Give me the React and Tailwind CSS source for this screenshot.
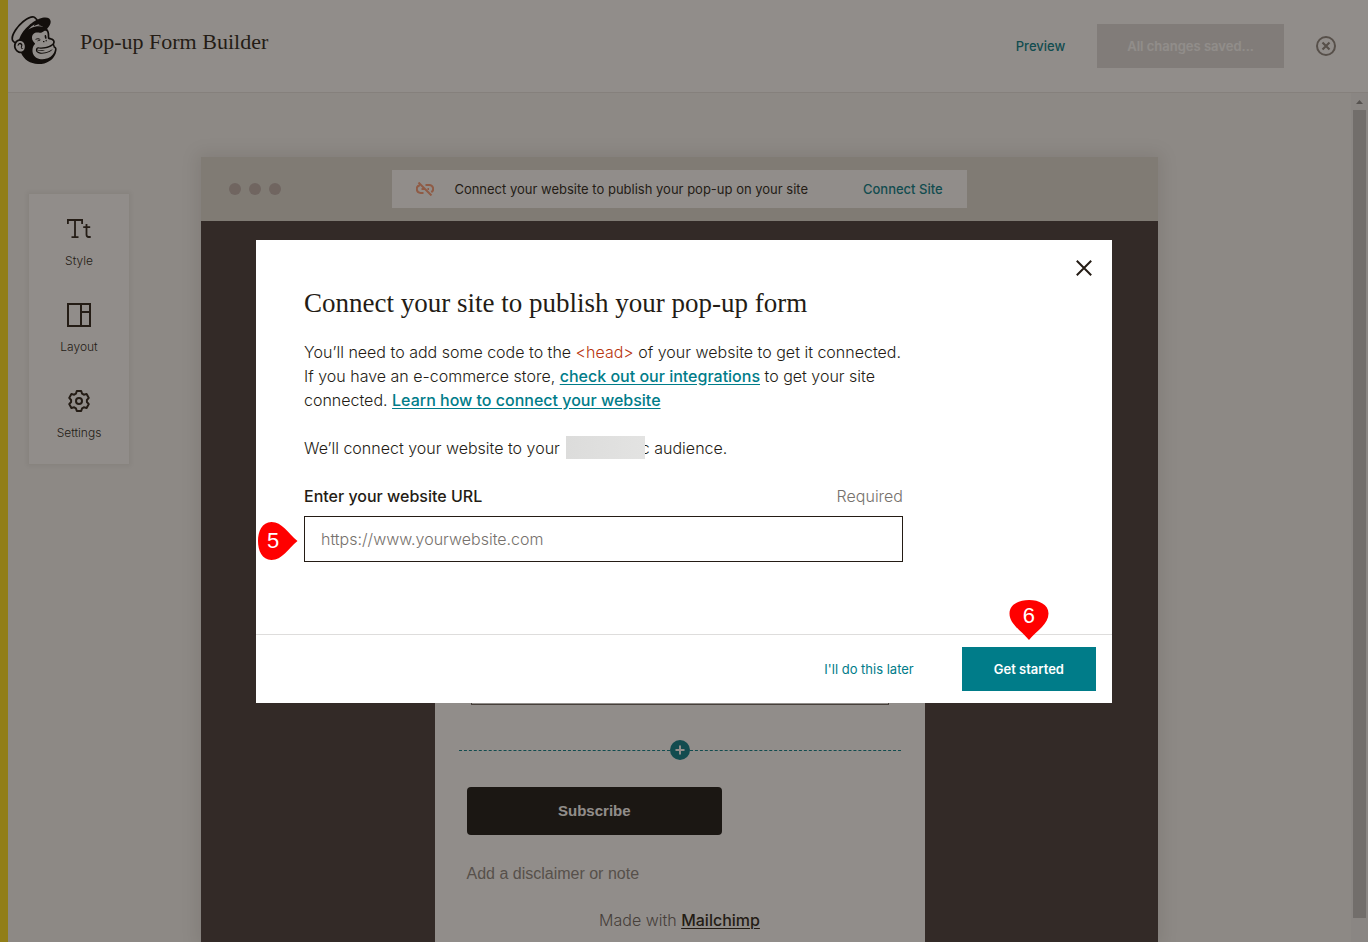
import React from "react";
import { SiMailchimp } from "react-icons/si";

const marks = {
  left: "M39.5 19 C30 27 24 38 13.500 38 C4 38 0 28.500 0 19 C0 9.500 4 0 13.500 0 C24 0 30 11 39.500 19 Z",
  down: "M19.500 40 C11.500 30.500 0 24 0 13.500 C0 4.500 9.500 0 19.500 0 C29.500 0 39 4.500 39 13.500 C39 24 27.500 30.500 19.500 40 Z",
};

function ToolButton({ label, children }) {
  return (
    <button type="button" className="flex flex-col items-center gap-3 text-xs leading-4 font-light text-[#241c15]">
      <span className="flex h-6 w-6 items-center justify-center">{children}</span>
      {label}
    </button>
  );
}

function Header() {
  return (
    <header className="flex h-[93px] shrink-0 items-center justify-between border-b border-[#e6e5e3] bg-white pr-8 pl-0.5">
      <div className="flex items-center gap-[22px] pb-2">
        <SiMailchimp className="mb-1 h-12 w-12 text-black" aria-label="Mailchimp" />
        <h1 className="font-['Liberation_Serif',serif] text-[22px] leading-7 text-[#241c15]">Pop-up Form Builder</h1>
      </div>
      <div className="flex items-center gap-8">
        <a href="#preview" className="pt-0.5 text-[13px] font-medium text-[#007c89]">Preview</a>
        <button type="button" disabled className="h-11 bg-[#dedddc] px-[30px] pt-0.5 text-[13px] font-semibold text-white">
          All changes saved...
        </button>
        <button type="button" aria-label="Exit">
          <svg viewBox="0 0 20 20" className="h-5 w-5" fill="none" stroke="#8b847e" strokeWidth="2">
            <circle cx="10" cy="10" r="9" />
            <path d="M6.500 6.500l7 7M13.500 6.500l-7 7" strokeWidth="2.2" />
          </svg>
        </button>
      </div>
    </header>
  );
}

function Toolbar() {
  return (
    <nav className="mt-[101px] ml-[21px] flex w-[100px] flex-col items-center gap-[34px] self-start bg-white py-[23px] shadow-[0_0_4px_2px_rgba(36,28,21,0.06)]">
      <ToolButton label="Style">
        <svg viewBox="0 0 24 24" className="h-6 w-6" fill="none" stroke="#241c15" strokeWidth="1.800">
          <path d="M.900 7V3h14.200v4M8 3v17M4.500 20.100h7M19.500 7v10.500c0 1.700.8 2.500 2.200 2.500h2M16.200 10.200h7" />
        </svg>
      </ToolButton>
      <ToolButton label="Layout">
        <svg viewBox="0 0 24 24" className="h-6 w-6" fill="none" stroke="#241c15" strokeWidth="2">
          <path d="M1 1h22v22H1zM14 1v22M14 9h9" />
        </svg>
      </ToolButton>
      <ToolButton label="Settings">
        <svg viewBox="0 0 24 24" className="h-6 w-6" fill="none" stroke="#241c15" strokeWidth="2" strokeLinejoin="round">
          <path d="M9.800 2h4.400l.9 2.700 1.700 1 2.800-.6 2.200 3.800-1.900 2.100v2l1.900 2.100-2.200 3.800-2.800-.6-1.700 1-.9 2.700H9.800l-.9-2.700-1.700-1-2.800.6-2.200-3.800L4.100 13v-2L2.200 8.900l2.200-3.800 2.800.6 1.700-1z" />
          <circle cx="12" cy="12" r="3" />
        </svg>
      </ToolButton>
    </nav>
  );
}

function PreviewWindow() {
  return (
    <section className="mt-16 flex min-h-0 flex-col bg-[#423839] shadow-[0_0_16px_4px_rgba(36,28,21,0.1)]">
      <div className="grid h-16 shrink-0 grid-cols-5 items-center bg-[#dcdad3]">
        <div className="flex gap-2 pl-7">
          <span className="h-3 w-3 rounded-full bg-[#bcaeab]" />
          <span className="h-3 w-3 rounded-full bg-[#bcaeab]" />
          <span className="h-3 w-3 rounded-full bg-[#bcaeab]" />
        </div>
        <div className="col-span-3 flex h-[38px] items-center bg-white px-6 text-[13px]">
          <svg viewBox="0 0 18 14" className="mr-5 h-3.5 w-[18px] shrink-0" fill="none" stroke="#fa9a74" strokeWidth="2">
            <path d="M3.800 3.200A3.900 3.900 0 0 0 4.700 10.900H7.500M9.500 3h3.800a3.900 3.900 0 0 1 2 7.200M5.500 7h4M11.500 7h1.500M2.500 .5l13 13" />
          </svg>
          <span className="pt-0.5 whitespace-nowrap text-[#241c15]">Connect your website to publish your pop-up on your site</span>
          <a href="#connect" className="ml-auto pt-0.5 font-medium whitespace-nowrap text-[#007c89]">Connect Site</a>
        </div>
      </div>
      <form className="mx-auto mt-16 flex w-[490px] flex-1 flex-col justify-end bg-white px-6 pb-2.5">
        <div className="px-3">
          <input aria-label="Email Address" className="block h-11 w-full border border-[#6b6560]" />
        </div>
        <div className="mt-[35px] flex items-center">
          <span className="flex-1 border-t border-dashed border-[#007c89]" />
          <button type="button" aria-label="Add field" className="flex h-5 w-5 items-center justify-center rounded-full bg-[#007c89]">
            <svg viewBox="0 0 10 10" className="h-2.5 w-2.5" stroke="#fff" strokeWidth="2">
              <path d="M5 .5v9M.5 5h9" />
            </svg>
          </button>
          <span className="flex-1 border-t border-dashed border-[#007c89]" />
        </div>
        <div className="px-2">
          <button type="button" className="mt-[27px] block h-12 w-3/5 rounded bg-[#121211] font-['Liberation_Sans',sans-serif] text-[15px] font-bold text-white">
            Subscribe
          </button>
          <p className="mt-[27px] font-['Liberation_Sans',sans-serif] text-base leading-6 text-[#8a8580]">Add a disclaimer or note</p>
          <p className="mt-[22px] text-center text-base leading-6 font-light text-[#6a645f]">
            Made with <a href="#mailchimp" className="font-medium text-[#241c15] underline underline-offset-2">Mailchimp</a>
          </p>
        </div>
      </form>
    </section>
  );
}

function ConnectDialog() {
  return (
    <div className="fixed inset-0 flex items-center justify-center bg-[#241c15]/50">
      <div role="dialog" aria-labelledby="dialog-title" className="relative w-full max-w-[856px] bg-white text-[#241c15]">
        <button type="button" aria-label="Close" className="absolute top-5 right-5">
          <svg viewBox="0 0 16 16" className="h-4 w-4" stroke="#241c15" strokeWidth="2">
            <path d="M.8.8l14.400 14.400M15.200.8L.8 15.200" />
          </svg>
        </button>
        <div className="px-12 pt-[47px] pb-[72px]">
          <h2 id="dialog-title" className="font-['Liberation_Serif',serif] text-[27px] leading-8">
            Connect your site to publish your pop-up form
          </h2>
          <div className="mt-[21px] text-base leading-6 font-light whitespace-nowrap">
            <p>
              You’ll need to add some code to the <span className="text-[#b8350e]">&lt;head&gt;</span> of your website to get it connected.
              <br />
              If you have an e-commerce store, <a href="#integrations" className="font-medium text-[#007c89] underline underline-offset-2">check out our integrations</a> to get your site
              <br />
              connected. <a href="#learn" className="font-medium text-[#007c89] underline underline-offset-2">Learn how to connect your website</a>
            </p>
            <p className="mt-6 flex items-center">
              We’ll connect your website to your
              <span className="relative z-10 ml-1.5 h-[23px] w-[79px] bg-linear-to-r from-[#dcdcdb] to-[#e3e3e2]" />
              <span className="-ml-1">c audience.</span>
            </p>
          </div>
          <div className="mt-6 mr-[161px]">
            <div className="flex justify-between text-base leading-6">
              <label htmlFor="site-url" className="font-medium">Enter your website URL</label>
              <span className="font-light text-[#76716c]">Required</span>
            </div>
            <div className="relative mt-2">
              <input
                id="site-url"
                type="url"
                placeholder="https://www.yourwebsite.com"
                className="block h-[46px] w-full border border-[#241c15] px-4 text-base font-light placeholder:text-[#76716c]"
              />
              <div className="absolute top-1.5 right-full mr-1.5 flex h-[38px] w-10 items-center pl-[9px]">
                <svg viewBox="0 0 40 38" className="absolute inset-0 h-full w-full" fill="#ff0000"><path d={marks.left} /></svg>
                <span className="relative font-['Liberation_Sans',sans-serif] text-[22px] leading-6 text-white">5</span>
              </div>
            </div>
          </div>
        </div>
        <div className="flex items-center justify-end gap-12 border-t border-[#dedddc] px-4 py-3 text-[13px]">
          <button type="button" className="pt-0.5 text-[#007c89]">I'll do this later</button>
          <div className="relative">
            <button type="button" className="h-11 bg-[#007c89] px-8 pt-0.5 font-semibold text-white">Get started</button>
            <div className="absolute bottom-full left-1/2 mb-[7px] flex h-10 w-10 -translate-x-1/2 justify-center pt-1">
              <svg viewBox="0 0 39 40" className="absolute inset-0 h-full w-full" fill="#ff0000"><path d={marks.down} /></svg>
              <span className="relative font-['Liberation_Sans',sans-serif] text-[22px] leading-6 text-white">6</span>
            </div>
          </div>
        </div>
      </div>
    </div>
  );
}

export default function App() {
  return (
    <div className="flex h-screen overflow-hidden bg-[#f6f6f4] font-[Inter,sans-serif]">
      <div className="w-2 shrink-0 bg-[#ffe01b]" />
      <div className="flex min-w-0 flex-1 flex-col">
        <Header />
        <div className="flex min-h-0 flex-1">
          <main className="grid min-h-0 flex-1 grid-cols-[193px_1fr_193px]">
            <Toolbar />
            <PreviewWindow />
          </main>
          <div className="flex w-[17px] flex-col items-center bg-[#f1f1f1] pb-6">
            <svg viewBox="0 0 17 17" className="h-[17px] w-[17px] shrink-0" fill="#8a8a8a"><path d="M5 11h7L8.500 7z" /></svg>
            <div className="w-[13px] flex-1 bg-[#c1c1c1]" />
          </div>
        </div>
      </div>
      <ConnectDialog />
    </div>
  );
}
